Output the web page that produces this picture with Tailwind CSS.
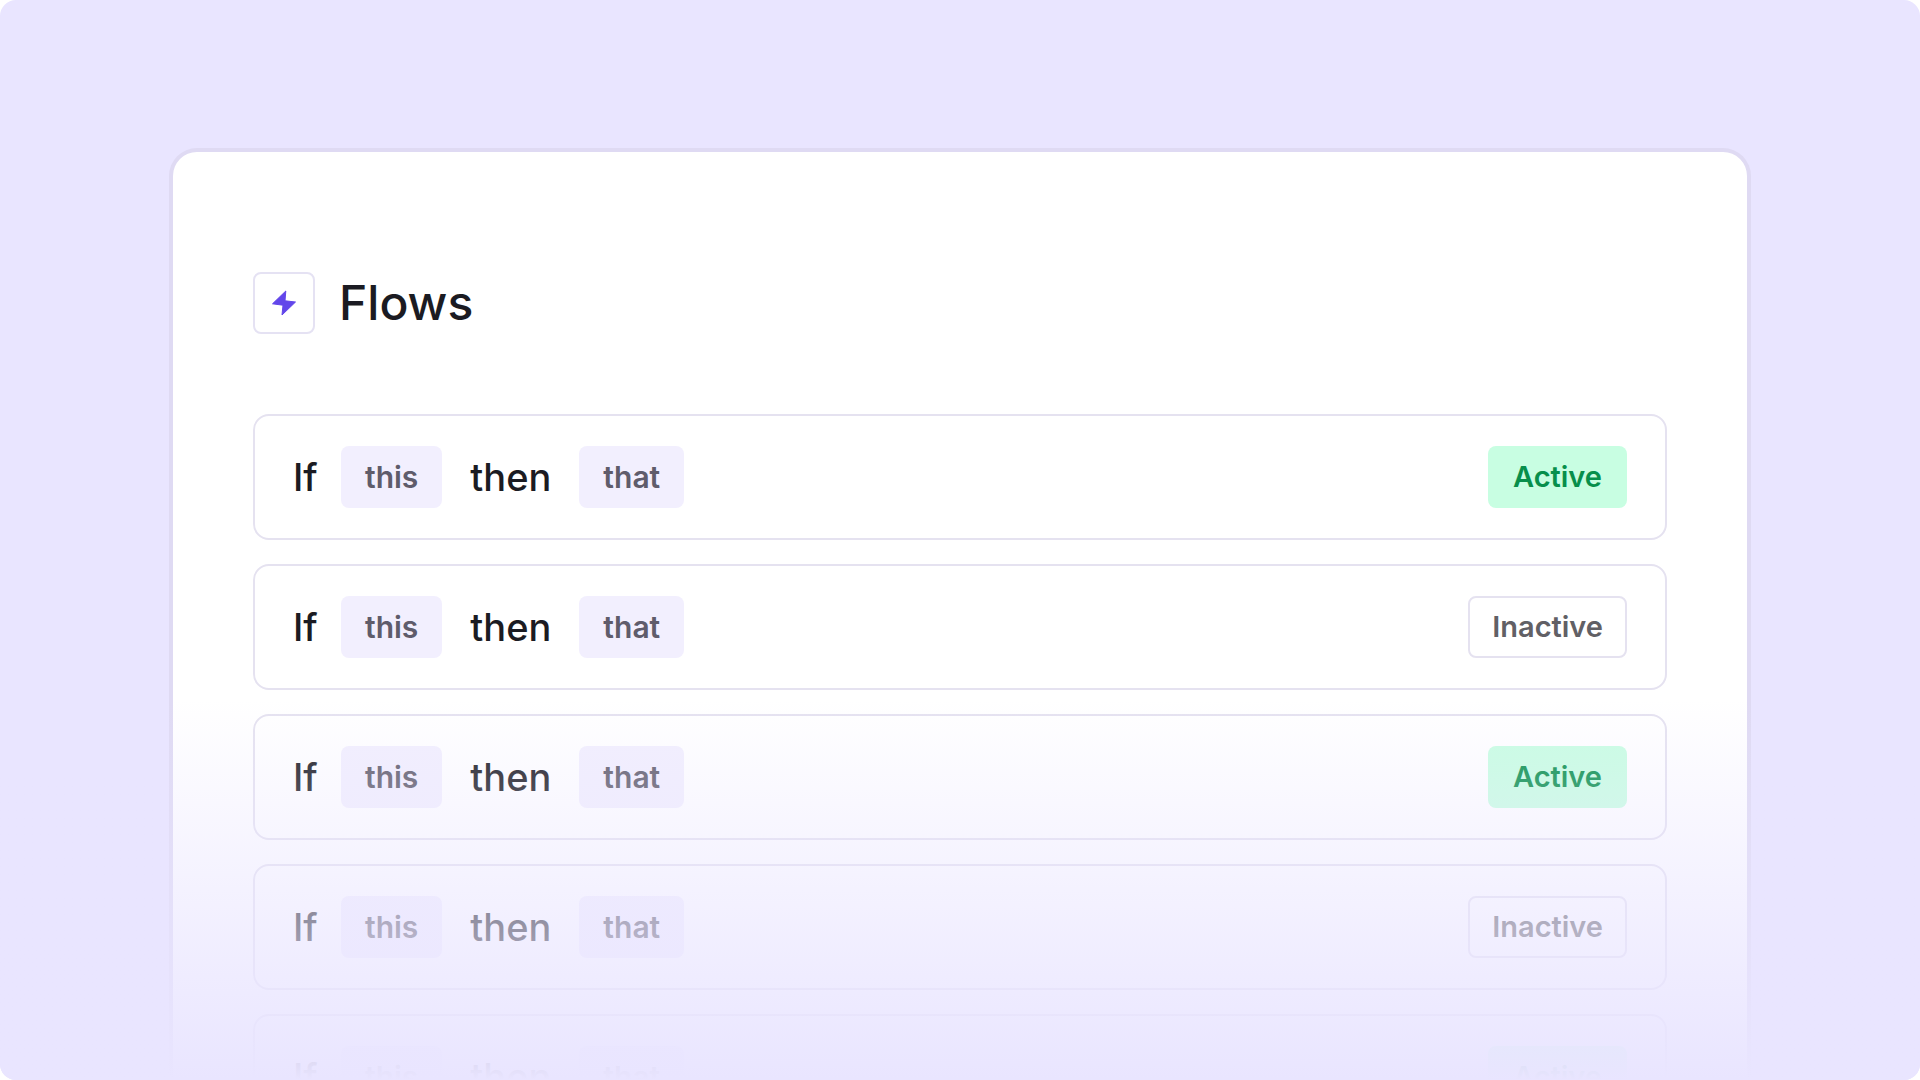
<!DOCTYPE html>
<html lang="en">
<head>
    <meta charset="UTF-8">
    <meta name="viewport" content="width=device-width, initial-scale=1.0">
    <title>Flows</title>
    <script src="https://cdn.jsdelivr.net/npm/@tailwindcss/browser@4"></script>
</head>
<body class="bg-white font-['Inter',sans-serif] text-[#1b1b22]">
    <div class="relative h-screen overflow-hidden rounded-2xl bg-[#e9e5ff] px-[169px] pt-[148px]">
        <main class="rounded-t-[28px] border-4 border-b-0 border-[#dfdaf3] bg-white px-20 pt-[120px]">
            <header class="flex items-center gap-6">
                <div class="flex size-[62px] items-center justify-center rounded-lg border-2 border-[#e5e2f3]">
                    <svg class="size-[26px]" viewBox="0 0 26 26" fill="#6246ea" stroke="#6246ea" stroke-width="1" stroke-linejoin="round" aria-hidden="true">
                        <path d="M14.8 1 L1.5 13.8 L12 15.2 L11 25 L24.5 12 L14 10.8 Z" />
                    </svg>
                </div>
                <h1 class="text-5xl leading-[62px] font-medium">Flows</h1>
            </header>

            <ul class="mt-20 flex flex-col gap-6">
                <li class="flex items-center justify-between rounded-2xl border-2 border-[#e5e2f0] px-[38px] py-[30px]">
                    <div class="flex items-center text-[38px] font-medium">
                        <span class="w-12">If</span>
                        <span class="rounded-lg bg-[#f2effe] px-6 text-[30px] leading-[62px] font-semibold text-[#5f5c6b]">this</span>
                        <span class="w-[137px] text-center">then</span>
                        <span class="rounded-lg bg-[#f2effe] px-6 text-[30px] leading-[62px] font-semibold text-[#5f5c6b]">that</span>
                    </div>
                    <span class="rounded-lg bg-[#c8fee2] px-[25px] text-[29px] leading-[62px] font-semibold text-[#078f4b]">Active</span>
                </li>
                <li class="flex items-center justify-between rounded-2xl border-2 border-[#e5e2f0] px-[38px] py-[30px]">
                    <div class="flex items-center text-[38px] font-medium">
                        <span class="w-12">If</span>
                        <span class="rounded-lg bg-[#f2effe] px-6 text-[30px] leading-[62px] font-semibold text-[#5f5c6b]">this</span>
                        <span class="w-[137px] text-center">then</span>
                        <span class="rounded-lg bg-[#f2effe] px-6 text-[30px] leading-[62px] font-semibold text-[#5f5c6b]">that</span>
                    </div>
                    <span class="rounded-lg border-2 border-[#e5e2f0] px-[22px] text-[29px] leading-[58px] font-semibold text-[#616065]">Inactive</span>
                </li>
                <li class="flex items-center justify-between rounded-2xl border-2 border-[#e5e2f0] px-[38px] py-[30px]">
                    <div class="flex items-center text-[38px] font-medium">
                        <span class="w-12">If</span>
                        <span class="rounded-lg bg-[#f2effe] px-6 text-[30px] leading-[62px] font-semibold text-[#5f5c6b]">this</span>
                        <span class="w-[137px] text-center">then</span>
                        <span class="rounded-lg bg-[#f2effe] px-6 text-[30px] leading-[62px] font-semibold text-[#5f5c6b]">that</span>
                    </div>
                    <span class="rounded-lg bg-[#c8fee2] px-[25px] text-[29px] leading-[62px] font-semibold text-[#078f4b]">Active</span>
                </li>
                <li class="flex items-center justify-between rounded-2xl border-2 border-[#e5e2f0] px-[38px] py-[30px]">
                    <div class="flex items-center text-[38px] font-medium">
                        <span class="w-12">If</span>
                        <span class="rounded-lg bg-[#f2effe] px-6 text-[30px] leading-[62px] font-semibold text-[#5f5c6b]">this</span>
                        <span class="w-[137px] text-center">then</span>
                        <span class="rounded-lg bg-[#f2effe] px-6 text-[30px] leading-[62px] font-semibold text-[#5f5c6b]">that</span>
                    </div>
                    <span class="rounded-lg border-2 border-[#e5e2f0] px-[22px] text-[29px] leading-[58px] font-semibold text-[#616065]">Inactive</span>
                </li>
                <li class="flex items-center justify-between rounded-2xl border-2 border-[#e5e2f0] px-[38px] py-[30px]">
                    <div class="flex items-center text-[38px] font-medium">
                        <span class="w-12">If</span>
                        <span class="rounded-lg bg-[#f2effe] px-6 text-[30px] leading-[62px] font-semibold text-[#5f5c6b]">this</span>
                        <span class="w-[137px] text-center">then</span>
                        <span class="rounded-lg bg-[#f2effe] px-6 text-[30px] leading-[62px] font-semibold text-[#5f5c6b]">that</span>
                    </div>
                    <span class="rounded-lg bg-[#c8fee2] px-[25px] text-[29px] leading-[62px] font-semibold text-[#078f4b]">Active</span>
                </li>
            </ul>
        </main>

        <!-- fade out the bottom of the list -->
        <div class="pointer-events-none absolute inset-x-0 bottom-0 h-[380px] bg-linear-to-b from-[#e9e5ff]/0 to-[#e9e5ff]"></div>
    </div>
</body>
</html>
